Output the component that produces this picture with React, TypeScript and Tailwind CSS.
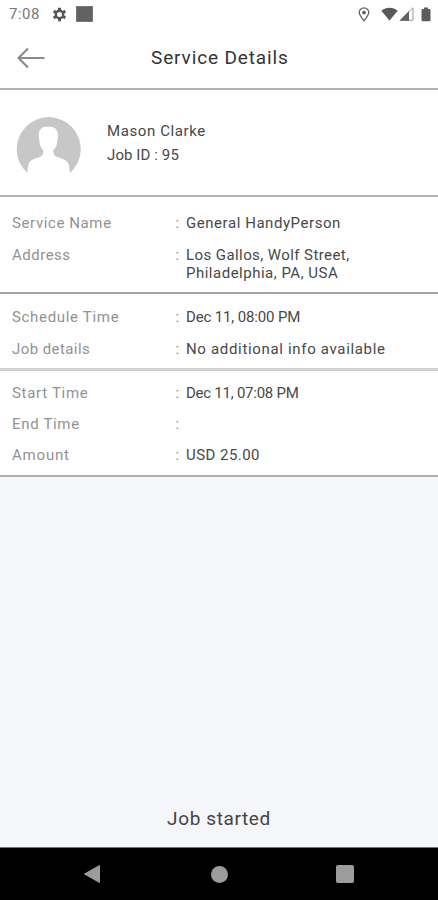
import React from "react";

type Line = { text: string; className: string };

type RowProps = {
  label: string;
  labelClass: string;
  lines?: Line[];
  className?: string;
};

function Row({ label, labelClass, lines = [], className = "" }: RowProps) {
  return (
    <div className={`flex items-start pl-3 text-[15px] leading-[18px] whitespace-nowrap ${className}`}>
      <span className={`w-[163.5px] text-[#929292] ${labelClass}`}>{label}</span>
      <span className="w-[10.5px] text-[#858585]">:</span>
      <span className="text-[#484848]">
        {lines.map((line) => (
          <span key={line.text} className={`block ${line.className}`}>
            {line.text}
          </span>
        ))}
      </span>
    </div>
  );
}

export default function App() {
  return (
    <div className="flex h-[900px] w-[438px] flex-col overflow-hidden bg-[#f4f6fa] font-['Roboto',sans-serif]">
      <header className="flex h-[90px] flex-col border-b-2 border-[#b2b2b2] bg-white">
        <div className="flex h-7 items-center pl-[9px] pr-[7px]">
          <span className="w-[43px] text-[15px] leading-[18px] tracking-[0.5px] text-[#777]">7:08</span>
          <svg width="15" height="15" viewBox="0 0 15 15" fill="none" stroke="#555">
            <circle cx="7.5" cy="7.5" r="3.7" strokeWidth="2.4" />
            <g strokeWidth="3">
              <path d="M7.5 3V.8M7.5 12v2.2M3.6 5.25 1.7 4.15M11.4 9.75l1.9 1.1M3.6 9.75l-1.9 1.1M11.4 5.25l1.9-1.1" />
            </g>
          </svg>
          <span className="ml-[9px] h-4 w-[17px] border border-[#777] bg-[#626262]" />
          <span className="flex-1" />
          <svg width="12" height="15" viewBox="0 0 12 15" fill="none" stroke="#666" strokeWidth="1.3">
            <path d="M6 13.8C3.4 10.3 1.2 7.9 1.2 5.6a4.8 4.8 0 0 1 9.6 0C10.8 7.9 8.6 10.3 6 13.8Z" />
            <circle cx="6" cy="5.6" r="1.3" fill="#555" />
          </svg>
          <svg className="ml-[11px]" width="17" height="14" viewBox="0 0 17 14">
            <path d="M.3 3.7C5-.2 12-.2 16.7 3.7L8.5 13.5Z" fill="#585858" />
          </svg>
          <svg className="ml-px" width="15" height="14" viewBox="0 0 15 14">
            <path d="M14 .8V13.2H1.5Z" fill="#fff" stroke="#999" />
            <path d="M.5 13.7 10 4V13.7Z" fill="#606060" />
          </svg>
          <svg className="ml-[7px]" width="10" height="15" viewBox="0 0 10 15">
            <path d="M3 .5h4V2h1.2Q9.5 2 9.5 3.2V13.2Q9.5 14.3 8.3 14.3H1.7Q.5 14.3.5 13.2V3.2Q.5 2 1.8 2H3Z" fill="#5c5c5c" />
          </svg>
        </div>
        <div className="flex h-[60px] items-center pl-[17px]">
          <svg width="28" height="22" viewBox="0 0 28 22" fill="none" stroke="#8b8b8b" strokeWidth="2.2">
            <path d="M11 1.5 1.5 11 11 20.5M1.5 11H27.5" />
          </svg>
          <h1 className="ml-[106px] text-[19px] leading-6 tracking-[0.87px] text-[#333]">Service Details</h1>
        </div>
      </header>

      <section className="flex h-[107px] items-start border-b-2 border-[#b2b2b2] bg-white pl-4">
        <svg className="mt-[26px]" width="65" height="65" viewBox="0 0 65 65">
          <path
            d="M11.5 57A32 32 0 1 1 54 57C53.5 51 53 47.5 50.5 45C47.500 42.5 43.5 42 40 40.5C37.5 39 37 36 37.5 34C40 32 41 29 41.3 25L42 20C42 13.5 39 10.5 32.3 10.5S22.7 13.5 22.7 20L23.4 25C23.7 29 24.7 32 27.2 34C27.7 36 27.2 39 24.7 40.5C21.5 42 17.5 42.5 14.5 45C12 47.5 12 51 11.5 57Z"
            fill="#c7c7c7"
          />
        </svg>
        <div className="ml-[26px] mt-[29px] text-[15px] leading-6 text-[#484848]">
          <p className="tracking-[0.6px]">Mason Clarke</p>
          <p className="tracking-[0.1px]">Job ID : 95</p>
        </div>
      </section>

      <section className="h-[97px] border-b-2 border-[#a3a3a3] bg-white pt-[17px]">
        <Row
          label="Service Name"
          labelClass="tracking-[0.6px]"
          lines={[{ text: "General HandyPerson", className: "tracking-[0.55px]" }]}
        />
        <Row
          label="Address"
          labelClass="tracking-[0.5px]"
          lines={[
            { text: "Los Gallos, Wolf Street,", className: "tracking-[0.42px]" },
            { text: "Philadelphia, PA, USA", className: "tracking-[0.5px]" },
          ]}
          className="mt-[14px]"
        />
      </section>

      <section className="h-[77px] border-b-[3px] border-[#d2d2d2] bg-white pt-[14px]">
        <Row
          label="Schedule Time"
          labelClass="tracking-[0.68px]"
          lines={[{ text: "Dec 11, 08:00 PM", className: "tracking-[-0.15px]" }]}
        />
        <Row
          label="Job details"
          labelClass="tracking-[0.42px]"
          lines={[{ text: "No additional info available", className: "tracking-[0.67px]" }]}
          className="mt-[14px]"
        />
      </section>

      <section className="h-[106px] border-b-2 border-[#b0b0b0] bg-white pt-[13px]">
        <Row
          label="Start Time"
          labelClass="tracking-[0.7px]"
          lines={[{ text: "Dec 11, 07:08 PM", className: "tracking-[-0.25px]" }]}
        />
        <Row label="End Time" labelClass="tracking-[0.68px]" className="mt-[13px]" />
        <Row
          label="Amount"
          labelClass="tracking-[0.8px]"
          lines={[{ text: "USD 25.00", className: "tracking-[0.45px]" }]}
          className="mt-[13px]"
        />
      </section>

      <main className="flex flex-1 items-end justify-center pb-4">
        <p className="text-[19px] leading-6 tracking-[0.62px] text-[#444]">Job started</p>
      </main>

      <nav className="flex h-[53px] items-center border-t border-[#70757a] bg-black pl-[83px]">
        <svg width="19" height="20" viewBox="0 0 19 20">
          <path d="M1.5 10 16.5 1.5V18.5Z" fill="#9c9c9c" stroke="#9c9c9c" strokeLinejoin="round" />
        </svg>
        <span className="ml-[109px] h-[17px] w-[17px] rounded-full bg-[#9c9c9c]" />
        <span className="ml-[108px] h-[18px] w-[18px] rounded-[2px] bg-[#9c9c9c]" />
      </nav>
    </div>
  );
}
